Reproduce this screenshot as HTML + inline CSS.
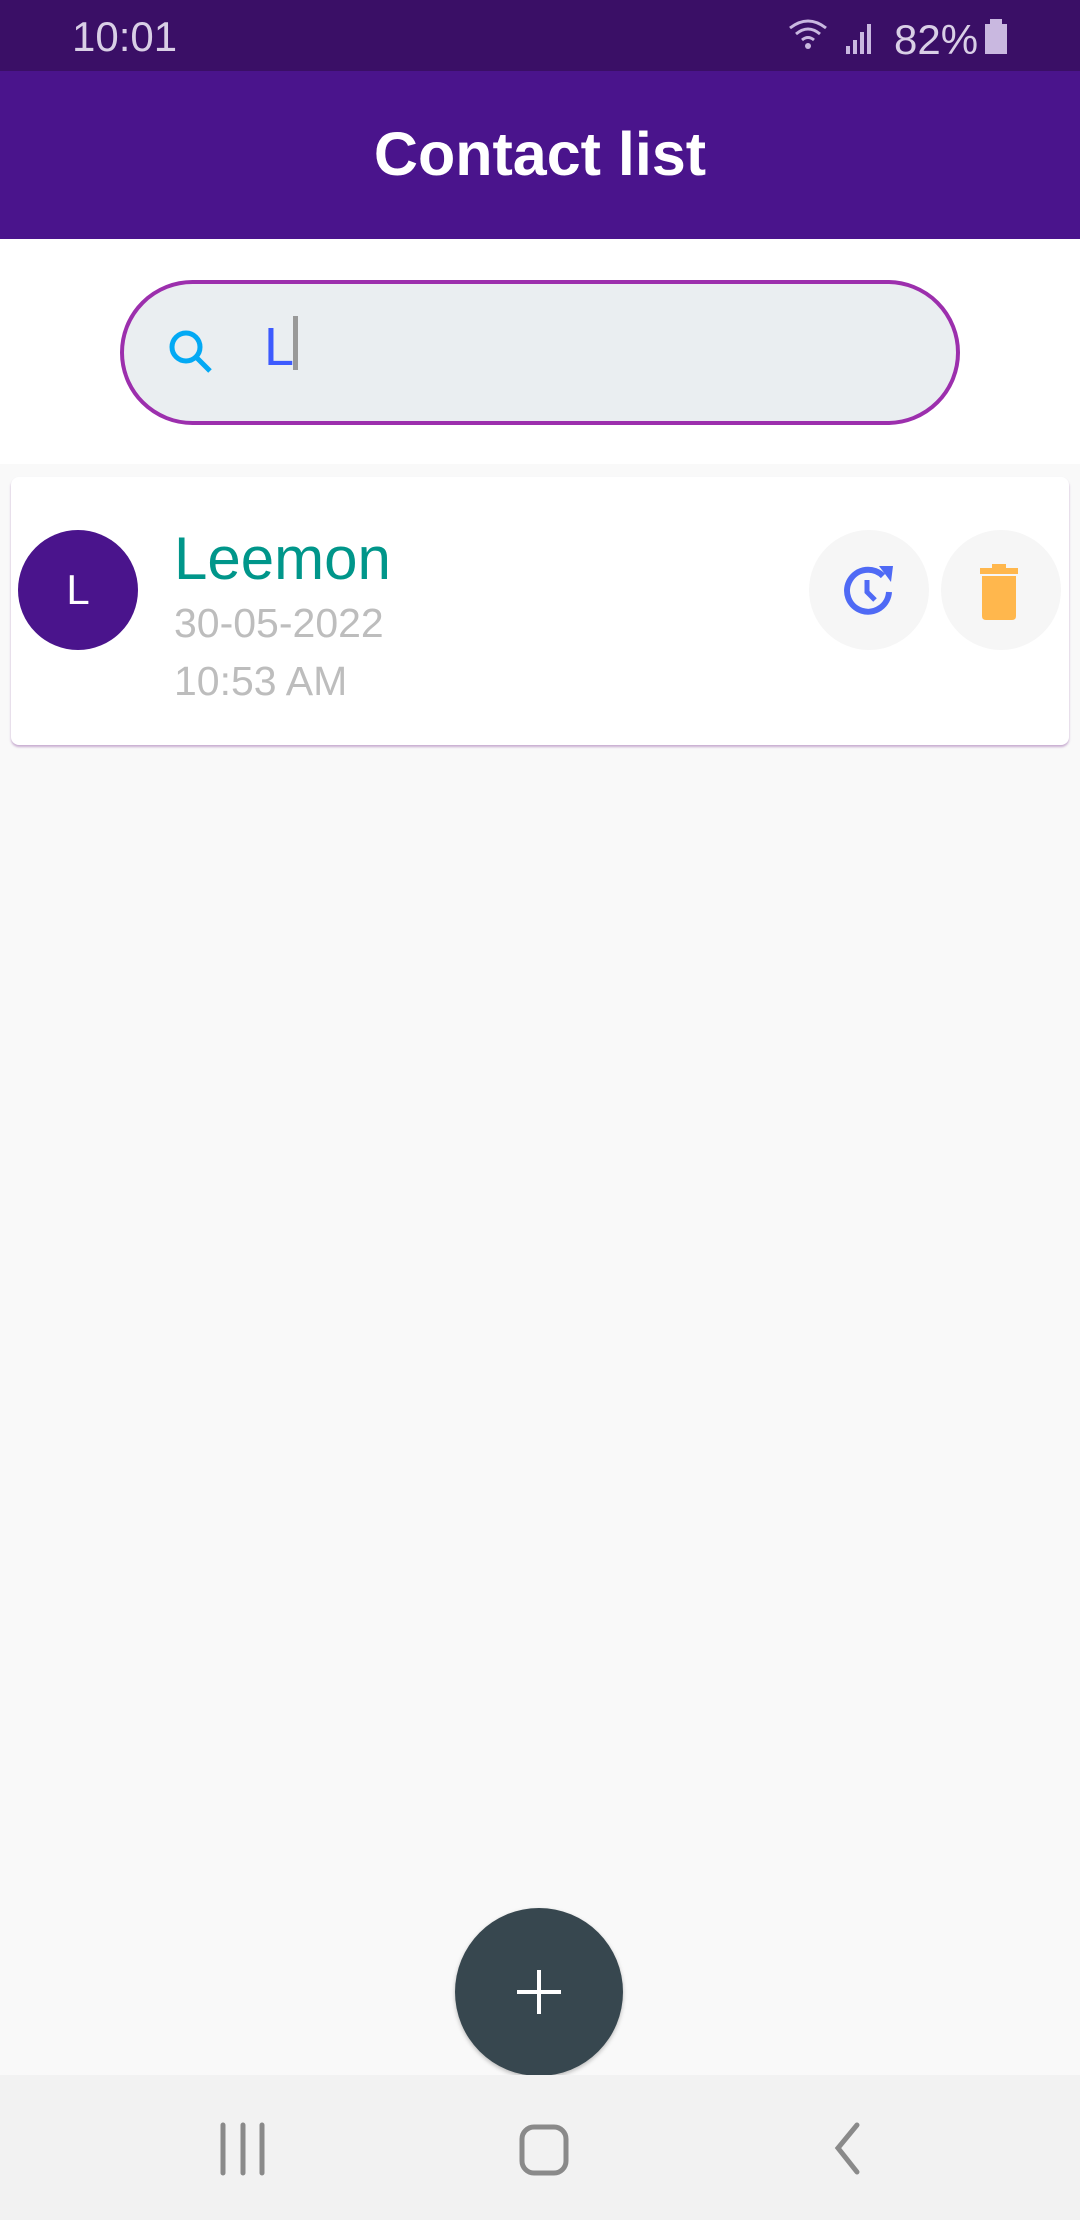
<!DOCTYPE html>
<html><head><meta charset="utf-8"><style>
*{margin:0;padding:0;box-sizing:border-box}
body{width:1080px;height:2220px;background:#f9f9f9;font-family:"Liberation Sans",sans-serif;position:relative;overflow:hidden}
.abs{position:absolute}
</style></head><body>
<div class="abs" style="left:0;top:0;width:1080px;height:71px;background:#3a0f66"></div>
<div class="abs" style="left:72px;top:13px;font-size:42px;color:#d9cfe6">10:01</div>
<svg class="abs" style="left:786px;top:14px" width="230" height="44" viewBox="0 0 230 44">
 <g fill="none" stroke="#c9b8e0" stroke-width="3"><path d="M4 14 Q22 0 40 14"/><path d="M10 20 Q22 10 34 20"/><path d="M16 26 Q22 21 28 26"/></g>
 <circle cx="22" cy="32" r="3" fill="#c9b8e0"/>
 <g fill="#c9b8e0"><rect x="60" y="32" width="4" height="8"/><rect x="67" y="26" width="4" height="14"/><rect x="74" y="18" width="4" height="22"/><rect x="81" y="10" width="4" height="30"/></g>
 <text x="108" y="40" font-size="42" fill="#d9cfe6" font-family="Liberation Sans">82%</text>
 <rect x="199" y="10" width="22" height="30" fill="#c9b8e0"/><rect x="204" y="5" width="12" height="6" fill="#c9b8e0"/>
</svg>
<div class="abs" style="left:0;top:71px;width:1080px;height:168px;background:#4a148c"></div>
<div class="abs" style="left:0;top:119px;width:1080px;text-align:center;font-size:61px;font-weight:bold;color:#fff">Contact list</div>
<div class="abs" style="left:0;top:239px;width:1080px;height:225px;background:#fff"></div>
<div class="abs" style="left:120px;top:280px;width:840px;height:145px;border:4px solid #9c2fad;border-radius:73px;background:#eaeef1"></div>
<svg class="abs" style="left:162px;top:323px" width="60" height="60" viewBox="0 0 60 60"><circle cx="24" cy="24" r="14" fill="none" stroke="#03a9f4" stroke-width="5"/><path d="M34 34 L48 48" stroke="#03a9f4" stroke-width="5"/></svg>
<div class="abs" style="left:264px;top:316px;font-size:54px;color:#3d5afe">L</div>
<div class="abs" style="left:293px;top:316px;width:5px;height:54px;background:#999"></div>
<div class="abs" style="left:11px;top:477px;width:1058px;height:268px;background:#fff;border-radius:8px;box-shadow:0 2px 2px rgba(140,80,160,.45)"></div>
<div class="abs" style="left:18px;top:530px;width:120px;height:120px;border-radius:50%;background:#4a148c;color:#fff;font-size:42px;text-align:center;line-height:120px">L</div>
<div class="abs" style="left:174px;top:524px;font-size:60px;color:#00968a">Leemon</div>
<div class="abs" style="left:174px;top:600px;font-size:41px;color:#bdbdbd">30-05-2022</div>
<div class="abs" style="left:174px;top:658px;font-size:41px;color:#bdbdbd">10:53 AM</div>
<div class="abs" style="left:809px;top:530px;width:120px;height:120px;border-radius:50%;background:#f6f6f6"></div>
<div class="abs" style="left:941px;top:530px;width:120px;height:120px;border-radius:50%;background:#f6f6f6"></div>
<svg class="abs" style="left:839px;top:560px" width="60" height="60" viewBox="0 0 60 60"><path d="M44 16 A21 21 0 1 0 50 32" fill="none" stroke="#4f6af5" stroke-width="6"/><path d="M40 6 L54 6 L52 22 Z" fill="#4f6af5"/><path d="M28 20 V32 L36 40" fill="none" stroke="#4f6af5" stroke-width="5"/></svg>
<svg class="abs" style="left:976px;top:562px" width="50" height="60" viewBox="0 0 50 60"><rect x="4" y="6" width="38" height="6" fill="#ffb74d"/><rect x="16" y="2" width="14" height="6" fill="#ffb74d"/><path d="M6 14 H40 V54 Q40 58 36 58 H10 Q6 58 6 54 Z" fill="#ffb74d"/></svg>
<div class="abs" style="left:455px;top:1908px;width:168px;height:168px;border-radius:50%;background:#37474f;box-shadow:0 2px 4px rgba(0,0,0,.25)"></div>
<div class="abs" style="left:517px;top:1990px;width:44px;height:4px;background:#fff"></div>
<div class="abs" style="left:537px;top:1970px;width:4px;height:44px;background:#fff"></div>
<div class="abs" style="left:0;top:2075px;width:1080px;height:145px;background:#f2f2f2"></div>
<svg class="abs" style="left:0;top:2110px" width="1080" height="80" viewBox="0 0 1080 80">
 <g stroke="#8a8a8a" stroke-width="5" stroke-linecap="round" fill="none">
  <path d="M223 15 V63 M243 15 V63 M262 15 V63"/>
  <rect x="522" y="17" width="44" height="46" rx="12"/>
  <path d="M857 15 L838 38 L857 62"/>
 </g>
</svg>
</body></html>
